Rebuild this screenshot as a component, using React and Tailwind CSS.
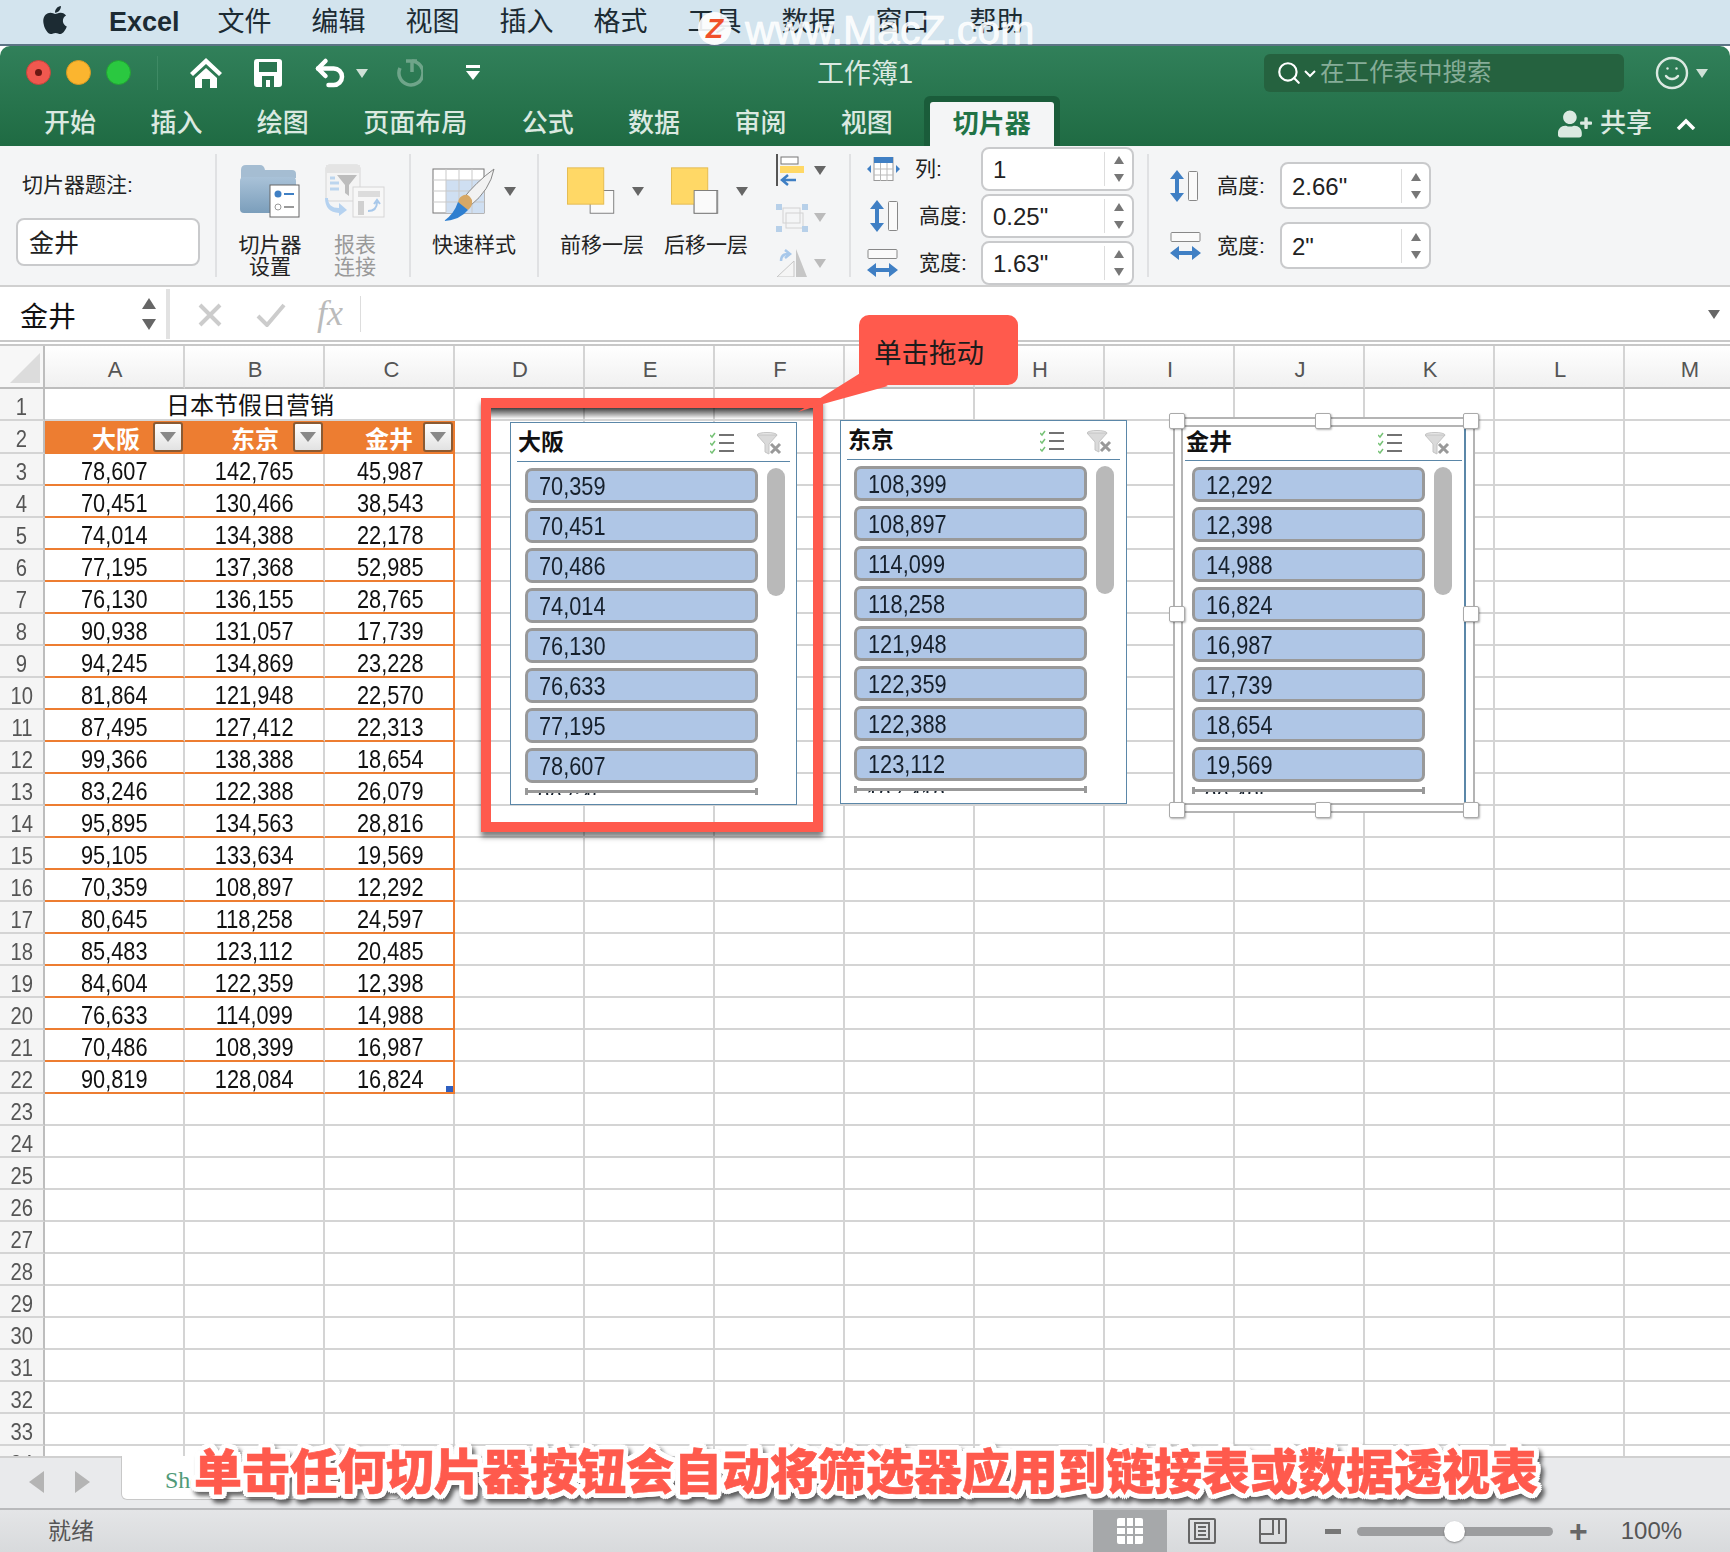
import { Search, Smile, Undo2 } from 'lucide-react';
import { FaApple, FaUserPlus } from 'react-icons/fa';

const menus = ['文件', '编辑', '视图', '插入', '格式', '工具', '数据', '窗口', '帮助'];
const tabs = ['开始', '插入', '绘图', '页面布局', '公式', '数据', '审阅', '视图'];
const columns = ['A', 'B', 'C', 'D', 'E', 'F', 'G', 'H', 'I', 'J', 'K', 'L', 'M'];

const tableRows = [
  ['78,607', '142,765', '45,987'], ['70,451', '130,466', '38,543'], ['74,014', '134,388', '22,178'],
  ['77,195', '137,368', '52,985'], ['76,130', '136,155', '28,765'], ['90,938', '131,057', '17,739'],
  ['94,245', '134,869', '23,228'], ['81,864', '121,948', '22,570'], ['87,495', '127,412', '22,313'],
  ['99,366', '138,388', '18,654'], ['83,246', '122,388', '26,079'], ['95,895', '134,563', '28,816'],
  ['95,105', '133,634', '19,569'], ['70,359', '108,897', '12,292'], ['80,645', '118,258', '24,597'],
  ['85,483', '123,112', '20,485'], ['84,604', '122,359', '12,398'], ['76,633', '114,099', '14,988'],
  ['70,486', '108,399', '16,987'], ['90,819', '128,084', '16,824'],
];

// the sheet digits are condensed in the screenshot
const squeeze = 'inline-block scale-x-[.87]';

// little grey dropdown triangle used all over the ribbon
function Caret({ className = 'border-t-[#666]' }) {
  return <span className={`inline-block w-0 h-0 border-x-[6px] border-x-transparent border-t-[9px] ${className}`} />;
}

function HomeIcon() {
  return (
    <svg width="32" height="30" viewBox="0 0 32 30" fill="white">
      <path d="M16 0 32 15 29 18 16 6 3 18 0 15Z" />
      <path d="M16 10 27 20V30H20V21H12V30H5V20Z" />
    </svg>
  );
}

function SaveIcon() {
  return (
    <svg width="28" height="28" viewBox="0 0 28 28">
      <rect width="28" height="28" rx="3" fill="white" />
      <rect x="5" y="3" width="18" height="10" fill="#2a7550" />
      <rect x="8" y="17" width="12" height="11" fill="#2a7550" />
      <rect x="12" y="21" width="4" height="7" fill="white" />
    </svg>
  );
}

function RedoIcon() {
  return (
    <svg width="30" height="30" viewBox="0 0 30 30" fill="none" stroke="#6fa58a" strokeWidth="3.5">
      <path d="M19 3 A12 12 0 1 1 7 10" />
      <path d="M19 3V14" />
      <path d="M13 3H24" />
    </svg>
  );
}

function FolderIcon() {
  return (
    <svg width="60" height="54" viewBox="0 0 60 54">
      <defs>
        <linearGradient id="fold" x1="0" y1="0" x2="0" y2="1">
          <stop offset="0" stopColor="#a9c2d8" />
          <stop offset="1" stopColor="#7b9ebb" />
        </linearGradient>
      </defs>
      <path d="M1 6Q1 1 6 1H20Q24 1 25 6H52Q56 6 56 10V14H1Z" fill="#a5bdd2" />
      <rect x="0" y="13" width="56" height="36" rx="4" fill="url(#fold)" />
      <rect x="30" y="21" width="29" height="32" fill="white" stroke="#666" />
      <circle cx="38" cy="30" r="3.5" fill="#3f7fc4" />
      <path d="M44 30H54" stroke="#3f7fc4" strokeWidth="2" />
      <circle cx="38" cy="43" r="3" fill="none" stroke="#999" />
      <path d="M44 43H54" stroke="#999" strokeWidth="2" />
    </svg>
  );
}

function ReportIcon() {
  return (
    <svg width="60" height="54" viewBox="0 0 60 54">
      <rect x="1" y="1" width="34" height="36" rx="3" fill="#f4f4f4" stroke="#d6d6d6" />
      <rect x="1" y="1" width="34" height="8" fill="#e4e4e4" />
      <path d="M12 11H32L24 21V32L20 29V21Z" fill="#bdbdbd" />
      <path d="M5 14H10M5 19H14M5 25H14" stroke="#bcd5ee" strokeWidth="3" />
      <rect x="28" y="23" width="31" height="30" fill="#f7f7f7" stroke="#d6d6d6" />
      <rect x="33" y="37" width="6" height="14" fill="#d0d0d0" />
      <rect x="33" y="27" width="22" height="6" fill="#dcdcdc" />
      <path d="M43 47Q52 47 52 38M49 40 52 36 55 40" fill="none" stroke="#a8c8ea" strokeWidth="2" />
      <path d="M3 34Q3 44 14 44V39L22 46 14 52V49Q0 48 0 34Z" fill="#b5d2f0" />
    </svg>
  );
}

function BrushIcon() {
  return (
    <svg width="64" height="54" viewBox="0 0 64 54" className="mt-[8px]">
      <rect x="1" y="1" width="51" height="44" fill="white" stroke="#777" />
      <rect x="14" y="12" width="38" height="33" fill="#cfdff2" />
      <path d="M14 1V45M27 1V45M40 1V45M1 12H52M1 23H52M1 34H52" stroke="#c9c9c9" />
      <path d="M62 1Q44 14 30 32L38 38Q58 22 62 1Z" fill="#f2f2f2" stroke="#888" />
      <path d="M30 28Q36 24 40 32 41 38 36 42L26 36Q26 30 30 28Z" fill="#d7a866" />
      <path d="M26 34 36 42Q28 52 12 53 22 46 26 34Z" fill="#2f7fd0" />
    </svg>
  );
}

function LayerIcon({ front }) {
  return (
    <svg width="54" height="52" viewBox="0 0 54 52">
      <rect x="25.5" y="25.5" width="26" height="25" fill="#fafafa" stroke="#777" />
      <rect x="0.5" y="0.5" width="40" height="40" fill="#ffd866" stroke="#e3b94c" />
      {front && <rect x="25.5" y="25.5" width="25" height="25" fill="#fafafa" stroke="#777" />}
    </svg>
  );
}

function AlignIcon() {
  return (
    <svg width="30" height="32" viewBox="0 0 30 32">
      <path d="M1 0V32" stroke="#555" strokeWidth="2" />
      <rect x="5" y="3" width="17" height="7" fill="white" stroke="#777" />
      <rect x="4" y="12" width="24" height="7" fill="#ffd866" />
      <path d="M6 26H20M12 21 6 26 12 31" fill="none" stroke="#3f7fc4" strokeWidth="2.5" />
    </svg>
  );
}

function GroupIcon() {
  return (
    <svg width="32" height="28" viewBox="0 0 32 28" className="opacity-60">
      <rect x="7" y="4" width="17" height="15" fill="none" stroke="#bbb" />
      <rect x="10" y="9" width="17" height="15" fill="none" stroke="#bbb" />
      <rect x="0" y="0" width="6" height="6" fill="#8fb8e2" />
      <rect x="26" y="0" width="6" height="6" fill="#8fb8e2" />
      <rect x="0" y="22" width="6" height="6" fill="#8fb8e2" />
      <rect x="26" y="22" width="6" height="6" fill="#8fb8e2" />
    </svg>
  );
}

function RotateIcon() {
  return (
    <svg width="32" height="28" viewBox="0 0 32 28">
      <path d="M20 0 31 28H20Z" fill="#c6c6c6" />
      <path d="M18 12V28H1Z" fill="#f5f5f5" stroke="#c6c6c6" />
      <path d="M5 12Q5 5 12 5M9 1 14 5 9 9" fill="none" stroke="#a8c8ea" strokeWidth="2.5" />
    </svg>
  );
}

function ColumnsIcon() {
  return (
    <svg width="33" height="24" viewBox="0 0 33 24">
      <path d="M0 12 4 8V16ZM33 12 29 8V16Z" fill="#3f7fc4" />
      <rect x="7" y="0.5" width="19" height="23" fill="white" stroke="#999" />
      <rect x="7" y="0" width="19" height="6" fill="#3f7fc4" />
      <path d="M13.5 6V24M20 6V24M7 12H26M7 18H26" stroke="#bbb" />
    </svg>
  );
}

function HeightIcon() {
  return (
    <svg width="28" height="32" viewBox="0 0 28 32">
      <path d="M7 0 14 9H9V23H14L7 32 0 23H5V9H0Z" fill="#3f7fc4" />
      <rect x="18.5" y="1.5" width="9" height="29" rx="1" fill="#fafafa" stroke="#888" />
    </svg>
  );
}

function WidthIcon() {
  return (
    <svg width="31" height="28" viewBox="0 0 31 28">
      <rect x="1" y="0.5" width="29" height="9" rx="1" fill="#fafafa" stroke="#888" />
      <path d="M0 21 9 14V19H22V14L31 21 22 28V23H9V28Z" fill="#3f7fc4" />
    </svg>
  );
}

function ChecklistIcon() {
  return (
    <svg width="25" height="22" viewBox="0 0 25 22" fill="none">
      <path d="M0 3 2 5 5 1M0 11 2 13 5 9M0 19 2 21 5 17" stroke="#76c276" strokeWidth="1.5" />
      <path d="M9 3H24M9 11H24M9 19H24" stroke="#444" strokeWidth="1.5" />
    </svg>
  );
}

function ClearFilterIcon() {
  return (
    <svg width="25" height="23" viewBox="0 0 25 23">
      <ellipse cx="10" cy="3" rx="10" ry="2.5" fill="#e6e6e6" stroke="#c4c4c4" />
      <path d="M0 3 8 12V20L12 22V12L20 3Z" fill="#dadada" stroke="#c4c4c4" />
      <path d="M14 12 23 21M23 12 14 21" stroke="#999" strokeWidth="3" />
    </svg>
  );
}

function SpinInput({ value, className }) {
  return (
    <div className={`flex items-center bg-white border-2 border-[#c9cacc] rounded-lg ${className}`}>
      <span className="flex-1 pl-[10px] pt-[3px] text-[24px] text-[#222]">{value}</span>
      <div className="flex flex-col items-center justify-center gap-[10px] w-[28px] h-[34px] border-l border-[#ddd]">
        <span className="w-0 h-0 border-x-[5px] border-x-transparent border-b-[8px] border-b-[#777]" />
        <span className="w-0 h-0 border-x-[5px] border-x-transparent border-t-[8px] border-t-[#777]" />
      </div>
    </div>
  );
}

function RibbonButton({ icon, label, muted, className, iconClass = 'justify-center', caret }) {
  return (
    <div className={`flex flex-col shrink-0 items-center ${className}`}>
      <div className={`flex items-center self-stretch shrink-0 h-[66px] mt-[4px] ${iconClass}`}>
        {icon}
        {caret && <Caret />}
      </div>
      <div className={`shrink-0 whitespace-nowrap text-[21px] leading-[22px] mt-[10px] text-center ${muted ? 'text-[#9a9a9a]' : 'text-[#222]'}`}>{label}</div>
    </div>
  );
}

function Slicer({ title, values, clipped, className, headClass, listClass }) {
  return (
    <div className={`absolute bg-white ${className}`}>
      <div className={`flex items-center justify-between border-b border-[#5b87a8] ${headClass}`}>
        <span className="text-[23px] font-bold text-[#111]">{title}</span>
        <div className="flex items-center gap-[22px] mt-[2px]">
          <ChecklistIcon />
          <ClearFilterIcon />
        </div>
      </div>
      <div className={`flex gap-[9px] mt-[6px] h-[327px] overflow-hidden ${listClass}`}>
        <div className="flex flex-col gap-[5px] w-[233px]">
          {values.map((v) => (
            <div key={v} className="flex items-center shrink-0 h-[35px] pl-[11px] pt-[3px] bg-[#afc6e6] border-[3px] border-[#999] rounded-[7px] text-[25px] text-[#16202c]">
              <span className={`${squeeze} origin-left`}>{v}</span>
            </div>
          ))}
          <div className="relative h-[10px] shrink-0 border-x-[3px] border-[#999] overflow-hidden">
            <span className={`${squeeze} origin-left align-top pl-[11px] text-[25px] leading-[22px] text-[#16202c]`}>{clipped}</span>
            <div className="absolute left-0 right-0 top-[2px] h-[3px] bg-[#999]" />
          </div>
        </div>
        <div className="w-[18px] h-[128px] shrink-0 rounded-full bg-[#b9b9b9]" />
      </div>
    </div>
  );
}

function Handle({ className }) {
  return <div className={`absolute w-[16px] h-[16px] bg-white border border-[#aaa] rounded-[2px] shadow-[1px_1px_2px_rgba(0,0,0,.3)] ${className}`} />;
}

export default function App() {
  return (
    <div className="relative w-[1730px] h-[1552px] overflow-hidden flex flex-col bg-[#d3e4ee] font-['Liberation_Sans','Noto_Sans_CJK_SC',sans-serif]">
      {/* mac menu bar */}
      <div className="flex items-center h-[44px] shrink-0 pl-[39px] text-[#1c2b33]">
        <FaApple className="text-[32px] mr-[38px] -mt-[4px]" />
        <span className="text-[27px] font-bold mr-[38px]">Excel</span>
        <div className="flex gap-[40px] text-[27px] leading-none">
          {menus.map((m) => <span key={m}>{m}</span>)}
        </div>
      </div>

      <div className="flex-1 min-h-0 flex flex-col border-t-2 border-[#5c7484] bg-white">
        {/* title bar + tabs */}
        <div className="h-[100px] shrink-0 rounded-t-[10px] bg-gradient-to-b from-[#31805a] to-[#1f6b43] text-[#dbe9e1]">
          <div className="flex items-center h-[53px]">
            <div className="flex items-center gap-[15px] pl-[26px] pr-[26px] border-r border-[#3f8a65] h-[34px]">
              <span className="flex items-center justify-center w-[25px] h-[25px] rounded-full bg-[#f0584f] border border-[#c8443c]">
                <span className="w-[7px] h-[7px] rounded-full bg-[#6b1712]" />
              </span>
              <span className="w-[25px] h-[25px] rounded-full bg-[#fbb52f] border border-[#d99a22]" />
              <span className="w-[25px] h-[25px] rounded-full bg-[#2ac840] border border-[#22a334]" />
            </div>
            <div className="flex items-center ml-[32px] w-[300px]">
              <HomeIcon />
              <span className="ml-[32px]"><SaveIcon /></span>
              <Undo2 size={36} strokeWidth={3} color="white" className="ml-[30px]" />
              <span className="ml-[8px]"><Caret className="border-t-[#cfe0d6]" /></span>
              <span className="ml-[25px]"><RedoIcon /></span>
              <span className="ml-[43px] flex flex-col items-center gap-[3px]">
                <span className="w-[14px] h-[3px] bg-white" />
                <span className="w-0 h-0 border-x-[7px] border-x-transparent border-t-[9px] border-t-white" />
              </span>
            </div>
            <div className="flex-1 pl-[327px] pt-[3px] text-[27px]">工作簿1</div>
            <div className="flex items-center w-[360px] h-[38px] rounded-md bg-[#25623f] pl-[12px] mr-[30px] text-[24.5px] text-[#86ad98]">
              <Search size={26} color="white" />
              <svg width="12" height="8" viewBox="0 0 12 8" fill="none" stroke="white" strokeWidth="2" className="ml-[2px] mt-[2px]"><path d="M1 1 6 6 11 1" /></svg>
              <span className="ml-[4px] pt-[2px]">在工作表中搜索</span>
            </div>
            <Smile size={36} color="#dbe9e1" strokeWidth={1.6} />
            <span className="ml-[6px] mr-[22px]"><Caret className="border-t-[#cfe0d6]" /></span>
          </div>
          <div className="flex items-end h-[47px] pl-[44px] text-[26px] font-medium">
            <div className="flex gap-[54.4px] pb-[3px]">
              {tabs.map((t) => <span key={t}>{t}</span>)}
            </div>
            <div className="ml-[31px] w-[136px] h-[50px] rounded-t-md bg-[#1a5c3a] px-[6px] pt-[6px]">
              <div className="h-[44px] rounded-t-[3px] bg-[#f4f5f6] text-center text-[#217346] font-bold leading-[44px]">切片器</div>
            </div>
            <div className="flex-1 flex items-center justify-end pb-[3px] pr-[34px]">
              <FaUserPlus size={34} />
              <span className="ml-[8px] mr-[24px]">共享</span>
              <svg width="20" height="12" viewBox="0 0 20 12" fill="none" stroke="white" strokeWidth="3.5"><path d="M2 11 10 3 18 11" /></svg>
            </div>
          </div>
        </div>

        {/* ribbon */}
        <div className="flex h-[141px] shrink-0 py-[8px] bg-[#f4f5f6] border-b-2 border-[#d0d0d0] text-[#222]">
          <div className="w-[217px] shrink-0 border-r-2 border-[#e0e1e3] pl-[16px]">
            <div className="pl-[6px] pt-[15px] text-[21px]">切片器题注:</div>
            <div className="flex items-center w-[184px] h-[48px] mt-[17px] pl-[11px] pt-[4px] bg-white border-2 border-[#c9cacc] rounded-lg text-[25px]">金井</div>
          </div>
          <div className="flex w-[194px] shrink-0 border-r-2 border-[#e0e1e3] pl-[18px]">
            <RibbonButton className="w-[70px]" icon={<FolderIcon />} label={<>切片器<br />设置</>} />
            <RibbonButton className="w-[62px] ml-[19px]" icon={<ReportIcon />} label={<>报表<br />连接</>} muted />
          </div>
          <div className="w-[128px] shrink-0 border-r-2 border-[#e0e1e3]">
            <RibbonButton className="w-full" iconClass="justify-center gap-[8px]" icon={<BrushIcon />} caret label="快速样式" />
          </div>
          <div className="flex w-[312px] shrink-0 border-r-2 border-[#e0e1e3] pl-[21px]">
            <RibbonButton className="w-[84px]" iconClass="justify-start pl-[7px] gap-[16px]" icon={<LayerIcon />} caret label="前移一层" />
            <RibbonButton className="w-[84px] ml-[20px]" iconClass="justify-start pl-[7px] gap-[16px]" icon={<LayerIcon front />} caret label="后移一层" />
            <div className="flex flex-col justify-between ml-[28px] h-[123px]">
              <div className="flex items-center gap-[8px]"><AlignIcon /><Caret /></div>
              <div className="flex items-center gap-[6px]"><GroupIcon /><Caret className="border-t-[#bbb]" /></div>
              <div className="flex items-center gap-[6px]"><RotateIcon /><Caret className="border-t-[#bbb]" /></div>
            </div>
          </div>
          <div className="flex flex-col justify-center gap-[3px] w-[298px] shrink-0 border-r-2 border-[#e0e1e3] pl-[16px] text-[21px]">
            <div className="flex items-center">
              <span className="w-[48px]"><ColumnsIcon /></span>
              <span className="w-[66px] pt-[1px]">列:</span>
              <SpinInput value="1" className="w-[153px] h-[44px]" />
            </div>
            <div className="flex items-center">
              <span className="w-[48px] pl-[3px]"><HeightIcon /></span>
              <span className="w-[66px] pl-[4px] pt-[1px]">高度:</span>
              <SpinInput value={'0.25"'} className="w-[153px] h-[44px]" />
            </div>
            <div className="flex items-center">
              <span className="w-[48px]"><WidthIcon /></span>
              <span className="w-[66px] pl-[4px] pt-[1px]">宽度:</span>
              <SpinInput value={'1.63"'} className="w-[153px] h-[44px]" />
            </div>
          </div>
          <div className="flex flex-col justify-center gap-[13px] pl-[21px] text-[21px]">
            <div className="flex items-center">
              <span className="w-[47px]"><HeightIcon /></span>
              <span className="w-[63px]">高度:</span>
              <SpinInput value={'2.66"'} className="w-[151px] h-[47px]" />
            </div>
            <div className="flex items-center">
              <span className="w-[47px]"><WidthIcon /></span>
              <span className="w-[63px]">宽度:</span>
              <SpinInput value={'2"'} className="w-[151px] h-[47px]" />
            </div>
          </div>
        </div>

        {/* formula bar */}
        <div className="flex items-center h-[53px] shrink-0 bg-white">
          <div className="flex items-center justify-between w-[170px] h-[50px] bg-white border-r-4 border-[#e2e2e2] pl-[20px] pr-[10px] text-[28px] text-[#111]">
            <span className="pt-[8px]">金井</span>
            <div className="flex flex-col gap-[10px]">
              <span className="w-0 h-0 border-x-[7px] border-x-transparent border-b-[11px] border-b-[#666]" />
              <span className="w-0 h-0 border-x-[7px] border-x-transparent border-t-[11px] border-t-[#666]" />
            </div>
          </div>
          <svg width="24" height="24" viewBox="0 0 24 24" className="ml-[28px] mt-[2px]" stroke="#ccc" strokeWidth="4"><path d="M2 2 22 22M22 2 2 22" /></svg>
          <svg width="30" height="24" viewBox="0 0 30 24" className="ml-[34px] mt-[2px]" fill="none" stroke="#ccc" strokeWidth="4"><path d="M2 13 11 22 28 2" /></svg>
          <span className="ml-[31px] w-[44px] h-[36px] border-r border-[#ddd] font-['Liberation_Serif',serif] italic text-[36px] leading-[34px] text-[#bbb]">fx</span>
          <span className="ml-auto mr-[10px]"><Caret className="border-t-[#666]" /></span>
        </div>
        <div className="h-[6px] shrink-0 bg-white border-y-2 border-[#c8c8c8]" />

        {/* sheet */}
        <div className="flex-1 min-h-0 overflow-hidden bg-white">
          <div className="grid grid-cols-[45px_140px_140px_130px_repeat(10,130px)] text-[#111]">
            <div className="relative h-[43px] bg-[#f7f7f7] border-r-2 border-b-2 border-[#bdbdbd]">
              <div className="absolute left-[10px] top-[7px] w-[30px] h-[30px] bg-[#dcdcdc] [clip-path:polygon(100%_0,100%_100%,0_100%)]" />
            </div>
            {columns.map((c) => (
              <div key={c} className={`flex items-center justify-center h-[43px] pt-[5px] bg-gradient-to-b from-white to-[#f0f0f0] border-r-2 border-b-2 border-[#d4d4d4] border-b-[#bdbdbd] text-[22px] text-[#555] ${c === 'C' ? 'pl-[5px]' : 'pl-[2px]'}`}>{c}</div>
            ))}

            {Array.from({ length: 34 }, (_, i) => {
              const rowNo = i + 1;
              const head = (
                <div key={`h${rowNo}`} className={`flex items-center justify-center pt-[6px] bg-[#f5f5f5] border-r-2 border-b-2 border-[#d4d4d4] border-r-[#bdbdbd] text-[23px] text-[#555] ${rowNo === 2 ? 'h-[33px]' : 'h-[32px]'}`}>
                  <span className="inline-block scale-x-[.88]">{rowNo}</span>
                </div>
              );
              const empties = (start) => columns.slice(start).map((c) => (
                <div key={`${c}${rowNo}`} className={`border-r-2 border-b-2 border-[#d4d4d4] ${rowNo === 2 ? 'h-[33px]' : 'h-[32px]'}`} />
              ));
              if (rowNo === 1) {
                return [
                  head,
                  <div key="title" className="col-span-3 flex items-center justify-center h-[32px] pt-[4px] pl-[2px] border-r-2 border-b-2 border-[#d4d4d4] text-[24px]">日本节假日营销</div>,
                  ...empties(3),
                ];
              }
              if (rowNo === 2) {
                return [
                  head,
                  ...[['大阪', 'pr-[45px]'], ['东京', 'pr-[46px]'], ['金井', 'pr-[42px]']].map(([name, pad]) => (
                    <div key={name} className={`relative flex items-center justify-end h-[33px] pt-[4px] bg-[#ed7d31] text-white font-bold text-[24px] ${pad}`}>
                      {name}
                      <span className="absolute right-[2px] top-[1px] flex items-center justify-center w-[30px] h-[30px] rounded-[3px] bg-gradient-to-b from-white to-[#e2e2e2] border-2 border-[#8a5a33]">
                        <span className="w-0 h-0 border-x-[8px] border-x-transparent border-t-[10px] border-t-[#888]" />
                      </span>
                    </div>
                  )),
                  ...empties(3),
                ];
              }
              const data = tableRows[i - 2];
              if (data) {
                return [
                  head,
                  ...data.map((v, j) => (
                    <div key={`${j}${rowNo}`} className={`relative flex items-center justify-center h-[32px] pt-[6px] border-b-2 border-[#ed7d31] text-[25px] ${j === 2 ? 'border-r-2 pl-[3px]' : 'border-r-2 border-r-[#d4d4d4] pl-[1px]'}`}>
                      <span className={squeeze}>{v}</span>
                      {j === 2 && rowNo === 22 && <span className="absolute right-0 bottom-0 w-[7px] h-[6px] bg-[#2f5fc0]" />}
                    </div>
                  )),
                  ...empties(3),
                ];
              }
              return [head, ...empties(0)];
            })}
          </div>
        </div>

        {/* sheet tabs */}
        <div className="flex h-[52px] shrink-0 bg-[#e9eaec] border-t-2 border-[#d0d0d0]">
          <div className="flex items-center gap-[31px] w-[121px] pl-[29px] pb-[2px]">
            <span className="w-0 h-0 border-y-[11px] border-y-transparent border-r-[15px] border-r-[#b4b4b4]" />
            <span className="w-0 h-0 border-y-[11px] border-y-transparent border-l-[15px] border-l-[#b4b4b4]" />
          </div>
          <div className="w-[280px] h-[44px] -mt-[2px] pl-[43px] bg-white rounded-b-md border-x border-b border-[#c8c8c8] font-['Liberation_Serif',serif] text-[24px] leading-[48px] text-[#4f9a78]">Sheet1</div>
        </div>

        {/* status bar */}
        <div className="flex items-center h-[44px] shrink-0 pl-[48px] bg-gradient-to-b from-[#e4e5e7] to-[#d8dadc] border-t-2 border-[#b9babc] text-[#555]">
          <span className="text-[23px]">就绪</span>
          <div className="flex items-center justify-center ml-[999px] w-[74px] h-[42px] bg-[#a6a8aa]">
            <svg width="26" height="26" viewBox="0 0 26 26"><rect width="26" height="26" rx="2" fill="white" /><path d="M9 0V26M17 0V26M0 9H26M0 17H26" stroke="#a6a8aa" strokeWidth="2" /></svg>
          </div>
          <svg width="28" height="26" viewBox="0 0 28 26" fill="none" stroke="#666" strokeWidth="2" className="ml-[21px]"><rect x="1" y="1" width="26" height="24" rx="1" /><rect x="7" y="5" width="14" height="16" /><path d="M10 9H18M10 13H18M10 17H18" /></svg>
          <svg width="28" height="26" viewBox="0 0 28 26" fill="none" stroke="#666" strokeWidth="2" className="ml-[43px]"><rect x="1" y="1" width="26" height="24" rx="1" /><path d="M1 16H14V1" /><path d="M20 1V16" /></svg>
          <span className="ml-[38px] w-[16px] h-[5px] bg-[#777]" />
          <div className="relative ml-[16px] w-[196px] h-[9px] rounded-full bg-[#9c9d9f]">
            <span className="absolute left-[87px] -top-[6px] w-[21px] h-[21px] rounded-full bg-white shadow-[0_1px_2px_rgba(0,0,0,.4)]" />
          </div>
          <span className="ml-[16px] text-[32px] leading-none font-bold text-[#666]">+</span>
          <span className="ml-[33px] text-[24px]">100%</span>
        </div>
      </div>

      {/* slicers, floating over the sheet */}
      <Slicer
        title="大阪"
        values={['70,359', '70,451', '70,486', '74,014', '76,130', '76,633', '77,195', '78,607']}
        clipped="80,645"
        className="left-[510px] top-[422px] w-[287px] h-[383px] border border-[#5b87a8]"
        headClass="h-[39px] mx-[6px] pl-[1px] pr-[8px]"
        listClass="ml-[14px]"
      />
      <Slicer
        title="东京"
        values={['108,399', '108,897', '114,099', '118,258', '121,948', '122,359', '122,388', '123,112']}
        clipped="127,412"
        className="left-[840px] top-[420px] w-[287px] h-[384px] border border-[#5b87a8]"
        headClass="h-[39px] mx-[6px] pl-[1px] pr-[8px]"
        listClass="ml-[13px]"
      />
      <div className="absolute left-[1173px] top-[417px] w-[302px] h-[396px] bg-white border-2 border-[#b4b4b4]" />
      <Slicer
        title="金井"
        values={['12,292', '12,398', '14,988', '16,824', '16,987', '17,739', '18,654', '19,569']}
        clipped="20,485"
        className="left-[1181px] top-[425px] w-[285px] h-[380px] border-2 border-[#b4b4b4] border-r-[#5b87a8]"
        headClass="h-[34px] mx-[2px] pl-[1px] pr-[12px] pb-[3px]"
        listClass="ml-[9px]"
      />
      <Handle className="left-[1169px] top-[413px]" />
      <Handle className="left-[1315px] top-[413px]" />
      <Handle className="left-[1463px] top-[413px]" />
      <Handle className="left-[1169px] top-[606px]" />
      <Handle className="left-[1463px] top-[606px]" />
      <Handle className="left-[1169px] top-[802px]" />
      <Handle className="left-[1315px] top-[802px]" />
      <Handle className="left-[1463px] top-[802px]" />

      {/* red annotation frame and callout */}
      <div className="absolute left-[481px] top-[398px] w-[342px] h-[434px] border-[10px] border-[#ff5a4d] shadow-[0_5px_5px_rgba(0,0,0,.5)]">
        <div className="h-[11px] bg-gradient-to-b from-black/75 to-transparent" />
      </div>
      <svg width="100" height="50" viewBox="0 0 100 50" className="absolute left-[790px] top-[368px]" fill="#ff5a4d">
        <path d="M72 4 98 18 33 36 8 44Z" />
      </svg>
      <div className="absolute left-[859px] top-[315px] flex items-center w-[159px] h-[70px] rounded-[10px] bg-[#ff5a4d] pl-[15px] pt-[7px] text-[27.5px] text-[#1c1c1c]">单击拖动</div>

      {/* watermark */}
      <div className="absolute left-[698px] top-[12px] flex items-center justify-center w-[33px] h-[33px] rounded-full bg-white/90 text-[28px] leading-none font-black italic text-[#f0502a]">Z</div>
      <div className="absolute left-[745px] top-[7px] text-[41px] leading-[46px] text-white/85 [-webkit-text-stroke:0.6px_white]">www.MacZ.com</div>

      {/* caption */}
      <div className="absolute left-[194px] top-[1439px] whitespace-nowrap text-[48px] leading-[68px] font-black text-[#ff5a4d] [-webkit-text-stroke:0.6px_#ff5a4d] [text-shadow:5px_0_0_white,-5px_0_0_white,0_5px_0_white,0_-5px_0_white,4px_4px_0_white,-4px_4px_0_white,4px_-4px_0_white,-4px_-4px_0_white,5px_2px_0_white,-5px_2px_0_white,5px_-2px_0_white,-5px_-2px_0_white,2px_5px_0_white,-2px_5px_0_white,2px_-5px_0_white,-2px_-5px_0_white] drop-shadow-[3px_4px_2px_rgba(0,0,0,.6)]">
        单击任何切片器按钮会自动将筛选器应用到链接表或数据透视表
      </div>
    </div>
  );
}
